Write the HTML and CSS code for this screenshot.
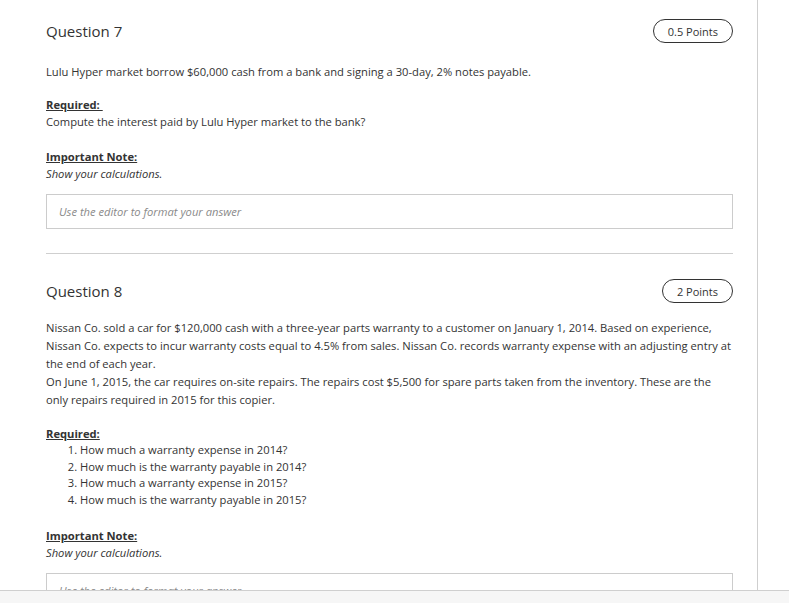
FILE: index.html
```html
<!DOCTYPE html>
<html lang="en">
<head>
<meta charset="utf-8">
<title>Questions</title>
<link rel="stylesheet" href="styles.css">
</head>
<body>
<div class="page">
  <main class="content">
    <section class="question q7">
      <header class="q-head">
        <h2 class="q-title">Question 7</h2>
        <span class="pill">0.5 Points</span>
      </header>
      <p class="q-text first">Lulu Hyper market borrow $60,000 cash from a bank and signing a 30-day, 2% notes payable.</p>
      <p class="label gap-sm">Required:&nbsp;</p>
      <p class="q-line">Compute the interest paid by Lulu Hyper market to the bank?</p>
      <p class="label gap-md">Important Note:</p>
      <p class="q-line note">Show your calculations.</p>
      <div class="editor">Use the editor to format your answer</div>
    </section>
    <hr class="divider">
    <section class="question q8">
      <header class="q-head">
        <h2 class="q-title">Question 8</h2>
        <span class="pill">2 Points</span>
      </header>
      <p class="q-text para">Nissan Co. sold a car for $120,000 cash with a three-year parts warranty to a customer on January 1, 2014. Based on experience, Nissan Co. expects to incur warranty costs equal to 4.5% from sales. Nissan Co. records warranty expense with an adjusting entry at the end of each year.<br>On June 1, 2015, the car requires on-site repairs. The repairs cost $5,500 for spare parts taken from the inventory. These are the only repairs required in 2015 for this copier.</p>
      <p class="label gap-lg">Required:</p>
      <ol class="req-list">
        <li>How much a warranty expense in 2014?</li>
        <li>How much is the warranty payable in 2014?</li>
        <li>How much a warranty expense in 2015?</li>
        <li>How much is the warranty payable in 2015?</li>
      </ol>
      <p class="label gap-md2">Important Note:</p>
      <p class="q-line note">Show your calculations.</p>
      <div class="editor">Use the editor to format your answer</div>
    </section>
  </main>
</div>
<div class="bottom-bar"></div>
</body>
</html>
```

FILE: styles.css
```css
html, body {
  margin: 0;
  padding: 0;
  background: #ffffff;
  overflow: hidden;
}
body {
  font-family: "Open Sans", "Noto Sans", "Liberation Sans", sans-serif;
  color: #333333;
  font-size: 11.2px;
}
.page {
  display: flex;
  height: 603px;
}
.content {
  width: 687px;
  padding: 0 24px 0 46px;
  border-right: 1px solid #cfcfcf;
}
.q-head {
  display: flex;
  align-items: center;
  justify-content: space-between;
  height: 24px;
}
.q7 .q-head { margin-top: 19px; }
.q8 .q-head { margin-top: 25px; }
.q-title {
  margin: 0;
  font-size: 15px;
  font-weight: 400;
  line-height: 20px;
  color: #333;
}
.pill {
  display: inline-flex;
  align-items: center;
  justify-content: center;
  box-sizing: border-box;
  height: 24px;
  padding: 0 14px;
  border: 1px solid #333;
  border-radius: 12px;
  font-size: 11px;
  color: #333;
}
p { margin: 0; }
.q-text { line-height: 18px; }
.q-text.first { margin-top: 20px; }
.q-text.para { margin-top: 16px; }
.q-line { line-height: 17px; }
.label {
  font-weight: 700;
  text-decoration: underline;
  line-height: 17px;
}
.gap-sm { margin-top: 15px; }
.gap-md { margin-top: 18px; }
.gap-lg { margin-top: 16px; }
.gap-md2 { margin-top: 18px; }
.note { font-style: italic; }
.req-list {
  margin: 0;
  padding-left: 34px;
  line-height: 16.7px;
}
.editor {
  box-sizing: border-box;
  height: 35px;
  margin-top: 12px;
  padding: 0 12px;
  border: 1px solid #cccccc;
  display: flex;
  align-items: center;
  font-style: italic;
  color: #8a8a8a;
  font-size: 11.2px;
}
.divider {
  border: 0;
  border-top: 1px solid #cfcfcf;
  margin: 24px 0 0 0;
  height: 0;
}
.bottom-bar {
  position: fixed;
  left: 0;
  right: 0;
  bottom: 0;
  height: 12px;
  background: #f6f6f6;
  border-top: 1px solid #cfcfcf;
}
```
